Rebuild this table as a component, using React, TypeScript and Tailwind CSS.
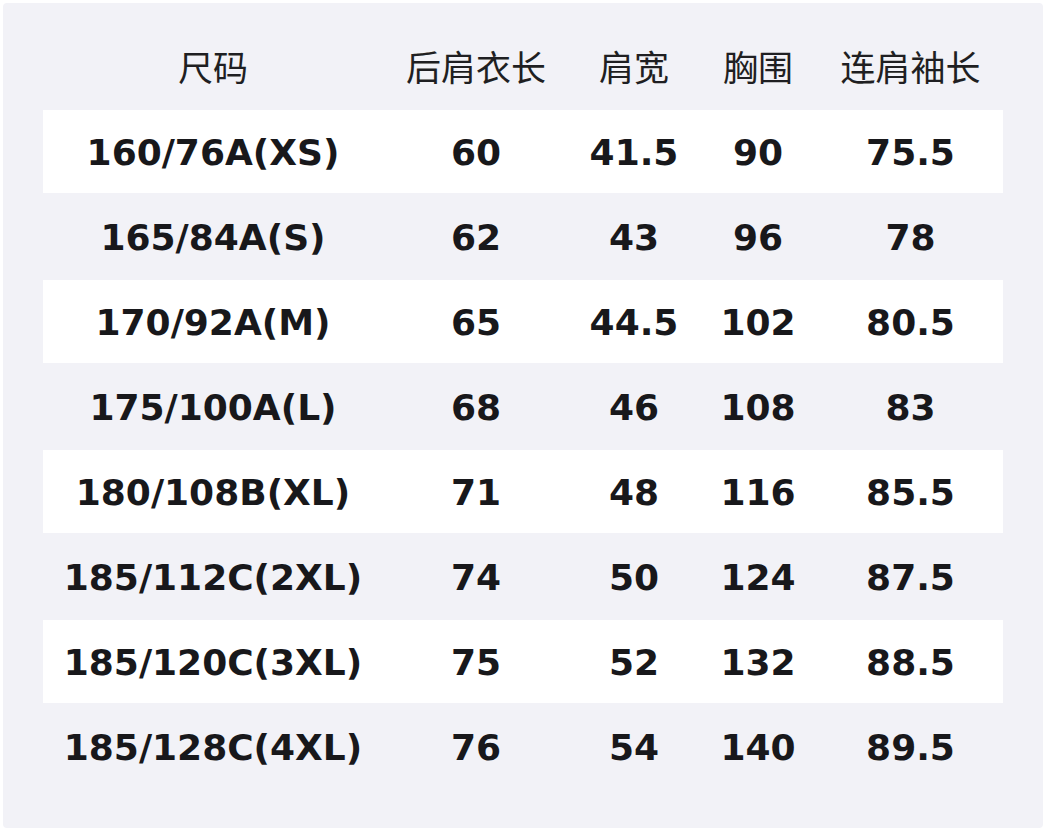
const headers = ["尺码", "后肩衣长", "肩宽", "胸围", "连肩袖长"];

const rows: string[][] = [
  ["160/76A(XS)", "60", "41.5", "90", "75.5"],
  ["165/84A(S)", "62", "43", "96", "78"],
  ["170/92A(M)", "65", "44.5", "102", "80.5"],
  ["175/100A(L)", "68", "46", "108", "83"],
  ["180/108B(XL)", "71", "48", "116", "85.5"],
  ["185/112C(2XL)", "74", "50", "124", "87.5"],
  ["185/120C(3XL)", "75", "52", "132", "88.5"],
  ["185/128C(4XL)", "76", "54", "140", "89.5"],
];

const cols = "grid grid-cols-[340px_186px_130px_118px_187px]";

const App = () => {
  return (
    <div className="h-[833px] w-[1047px] bg-white p-[3px]">
      <div className="h-[825px] w-[1040px] rounded-[4px] bg-[#f2f2f7] px-10 pt-[22px]">
        <div
          className={`${cols} h-[85px] items-center pb-[2px] text-center text-[35px] text-[#1f1f22]`}
          style={{ fontFamily: '"Noto Sans CJK SC", sans-serif' }}
        >
          {headers.map((h) => (
            <div key={h}>{h}</div>
          ))}
        </div>

        {rows.map((row, key) => (
          <div
            key={key}
            className={`${cols} mb-[2px] h-[83px] items-center pt-[3px] text-center text-[36px] font-bold text-[#18181b] ${
              key % 2 === 0 ? "bg-white" : ""
            }`}
            style={{ fontFamily: '"DejaVu Sans", sans-serif' }}
          >
            {row.map((cell, i) => (
              <div key={i}>{cell}</div>
            ))}
          </div>
        ))}
      </div>
    </div>
  );
};

export default App;
